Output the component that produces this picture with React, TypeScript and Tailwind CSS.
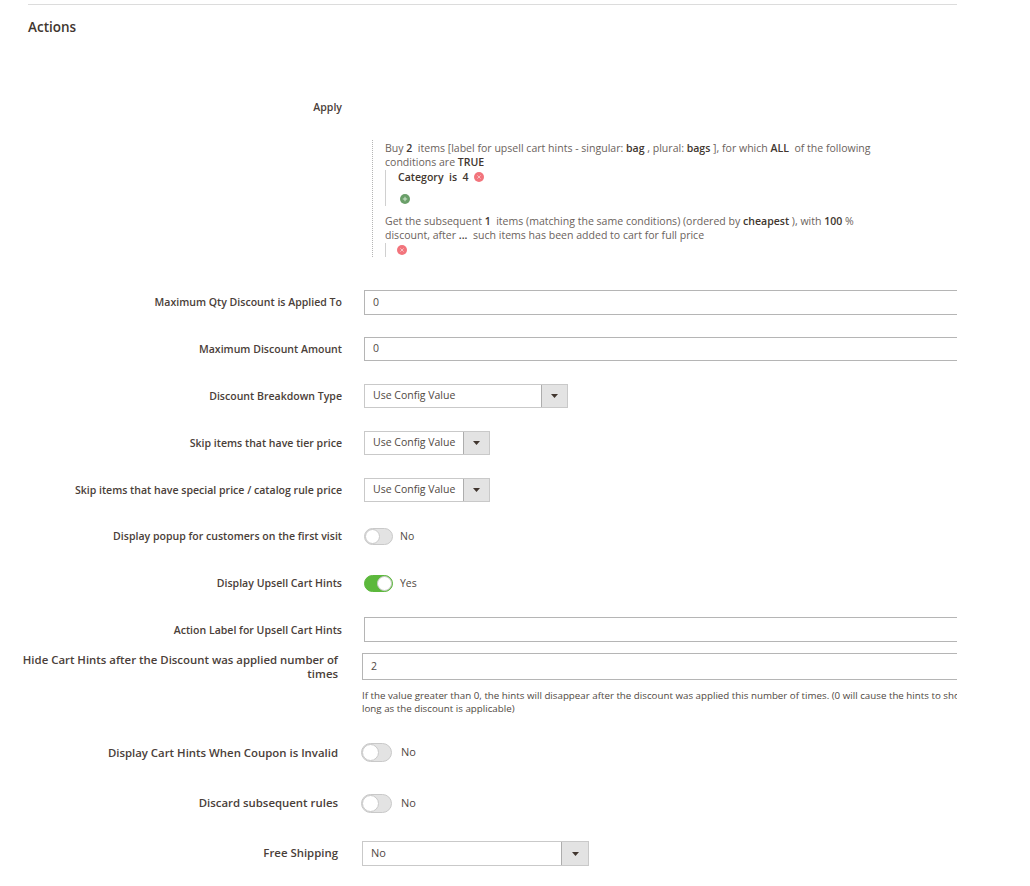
const font = "font-['Open_Sans',sans-serif]";

function Label({ children, w = "w-[342px]", mt = "", size = "text-[10.55px]" }: { children: React.ReactNode; w?: string; mt?: string; size?: string }) {
  return (
    <div className={`${w} ${mt} ${size} shrink-0 text-right leading-[14px] font-semibold text-[#4a4039]`}>
      {children}
    </div>
  );
}

function TextInput({ value = "", h = "h-[25px]" }: { value?: string; h?: string }) {
  return (
    <div className={`${h} w-[700px] shrink-0 flex items-center border border-[#b5b5b5] border-r-0 bg-white pl-[8px] text-[10.5px] text-[#514943]`}>
      {value}
    </div>
  );
}

function Select({ value, w, btn = "w-[26px]", h = "h-[24px]", size = "text-[10.5px]" }: { value: string; w: string; btn?: string; h?: string; size?: string }) {
  return (
    <div className={`${w} ${h} ${size} flex items-stretch border border-[#c9c9c9] bg-white text-[#514943]`}>
      <div className="flex-1 flex items-center pl-[8px] whitespace-nowrap overflow-hidden">{value}</div>
      <div className={`${btn} shrink-0 flex items-center justify-center border-l border-[#adadad] bg-[#e3e3e3]`}>
        <svg width="7" height="4" viewBox="0 0 7 4"><path d="M0 0h7L3.5 4z" fill="#41362f" /></svg>
      </div>
    </div>
  );
}

function Toggle({ on = false, large = false }: { on?: boolean; large?: boolean }) {
  const size = large ? "w-[31px] h-[19px]" : "w-[29px] h-[17px]";
  const knob = large ? "w-[17px] h-[17px]" : "w-[15px] h-[15px]";
  return (
    <div className={`flex items-center ${large ? "gap-[9px]" : "gap-[7px]"}`}>
      <div className={`${size} flex items-center rounded-full border ${on ? "justify-end bg-[#5cb83c] border-[#5cb83c]" : "justify-start bg-[#e3e3e3] border-[#c9c9c9]"}`}>
        <div className={`${knob} rounded-full bg-white border border-[#c9c9c9]`} />
      </div>
      <span className={`${large ? "text-[11px]" : "text-[10.5px]"} text-[#514943]`}>{on ? "Yes" : "No"}</span>
    </div>
  );
}

function Remove() {
  return (
    <svg width="10" height="10" viewBox="0 0 10 10" className="shrink-0">
      <circle cx="5" cy="5" r="5" fill="#f2747c" />
      <path d="M3.4 3.4l3.2 3.2M6.6 3.4l-3.2 3.2" stroke="#f9c0c4" strokeWidth="1" />
    </svg>
  );
}

function Add() {
  return (
    <svg width="10" height="10" viewBox="0 0 10 10">
      <circle cx="5" cy="5" r="5" fill="#6a9f69" />
      <path d="M5 2.8v4.4M2.8 5h4.4" stroke="#cfe6ce" strokeWidth="1" />
    </svg>
  );
}

function B({ children }: { children: React.ReactNode }) {
  return <b className="font-semibold text-[#41362f]">{children}</b>;
}

function Row({ children, mt }: { children: React.ReactNode; mt: string }) {
  return <div className={`flex items-center ${mt}`}>{children}</div>;
}

export default function App() {
  return (
    <div className={`${font} w-[1030px] h-[886px] overflow-hidden bg-white`}>
      <div className="w-[957px] h-[886px] overflow-hidden pt-[4px]">
        <div className="ml-[28px] border-t border-[#dcdcdc]" />
        <h2 className="ml-[28px] mt-[13px] text-[13.5px] leading-[18px] font-semibold text-[#41362f]">Actions</h2>

        <div className="mt-[64px]"><Label>Apply</Label></div>

        <div className="ml-[372px] mt-[26px] w-[510px] h-[117px] border-l border-dotted border-[#b5b5b5] pl-[12px] pt-[1px] text-[10.55px] leading-[14.4px] text-[#6b625c]">
          <div className="w-[490px]">
            Buy <B>2</B>&nbsp; items [label for upsell cart hints - singular: <B>bag</B> , plural: <B>bags</B> ], for which <B>ALL</B>&nbsp; of the following conditions are <B>TRUE</B>
          </div>
          <div className="h-[36px] border-l border-[#d0d0d0] pl-[12px]">
            <div className="flex items-center gap-[5px] font-semibold text-[#41362f]">
              <span className="whitespace-pre">Category  is  4</span>
              <Remove />
            </div>
            <div className="ml-[2px] mt-[10px]"><Add /></div>
          </div>
          <div className="mt-[8px] w-[490px]">
            Get the subsequent <B>1</B>&nbsp; items (matching the same conditions) (ordered by <B>cheapest</B> ), with <B>100</B> % discount, after <B>...</B>&nbsp; such items has been added to cart for full price
          </div>
          <div className="h-[14px] border-l border-[#d0d0d0] pl-[11px] pt-[2px]"><Remove /></div>
        </div>

        <div className="flex flex-col">
          <Row mt="mt-[33px]"><Label mt="mb-[1px]">Maximum Qty Discount is Applied To</Label><div className="w-[22px] shrink-0" /><TextInput value="0" /></Row>
          <Row mt="mt-[22px]"><Label>Maximum Discount Amount</Label><div className="w-[22px] shrink-0" /><TextInput value="0" h="h-[24px]" /></Row>
          <Row mt="mt-[23px]"><Label mt="mb-[1px]">Discount Breakdown Type</Label><div className="w-[22px] shrink-0" /><Select value="Use Config Value" w="w-[204px]" /></Row>
          <Row mt="mt-[23px]"><Label mt="mb-[1px]">Skip items that have tier price</Label><div className="w-[22px] shrink-0" /><Select value="Use Config Value" w="w-[126px]" /></Row>
          <Row mt="mt-[23px]"><Label mt="mb-[1px]">Skip items that have special price / catalog rule price</Label><div className="w-[22px] shrink-0" /><Select value="Use Config Value" w="w-[126px]" /></Row>
          <Row mt="mt-[26px]"><Label mt="mb-[1px]">Display popup for customers on the first visit</Label><div className="w-[22px] shrink-0" /><Toggle /></Row>
          <Row mt="mt-[30px]"><Label mt="mb-[1px]">Display Upsell Cart Hints</Label><div className="w-[22px] shrink-0" /><Toggle on /></Row>
          <Row mt="mt-[25px]"><Label>Action Label for Upsell Cart Hints</Label><div className="w-[22px] shrink-0" /><TextInput /></Row>

          <div className="flex items-start mt-[11px]">
            <Label w="w-[338px]" size="text-[11.4px]">
              <span className="block w-[320px] ml-auto">Hide Cart Hints after the Discount was applied number of times</span>
            </Label>
            <div className="w-[24px] shrink-0" />
            <div className="w-[700px] shrink-0">
              <TextInput value="2" h="h-[27px]" />
              <p className="mt-[9px] whitespace-nowrap text-[9.75px] leading-[13px] text-[#514943]">
                If the value greater than 0, the hints will disappear after the discount was applied this number of times. (0 will cause the hints to show as
                <br />
                long as the discount is applicable)
              </p>
            </div>
          </div>

          <Row mt="mt-[28px]"><Label w="w-[338px]" size="text-[11.4px]">Display Cart Hints When Coupon is Invalid</Label><div className="w-[23px] shrink-0" /><Toggle large /></Row>
          <Row mt="mt-[32px]"><Label w="w-[338px]" mt="mb-[1px]" size="text-[11.4px]">Discard subsequent rules</Label><div className="w-[23px] shrink-0" /><Toggle large /></Row>
          <Row mt="mt-[28px]"><Label w="w-[338px]" mt="mb-[1px]" size="text-[11.4px]">Free Shipping</Label><div className="w-[24px] shrink-0" /><Select value="No" w="w-[227px]" btn="w-[27px]" h="h-[25px]" size="text-[11px]" /></Row>
        </div>
      </div>
    </div>
  );
}
